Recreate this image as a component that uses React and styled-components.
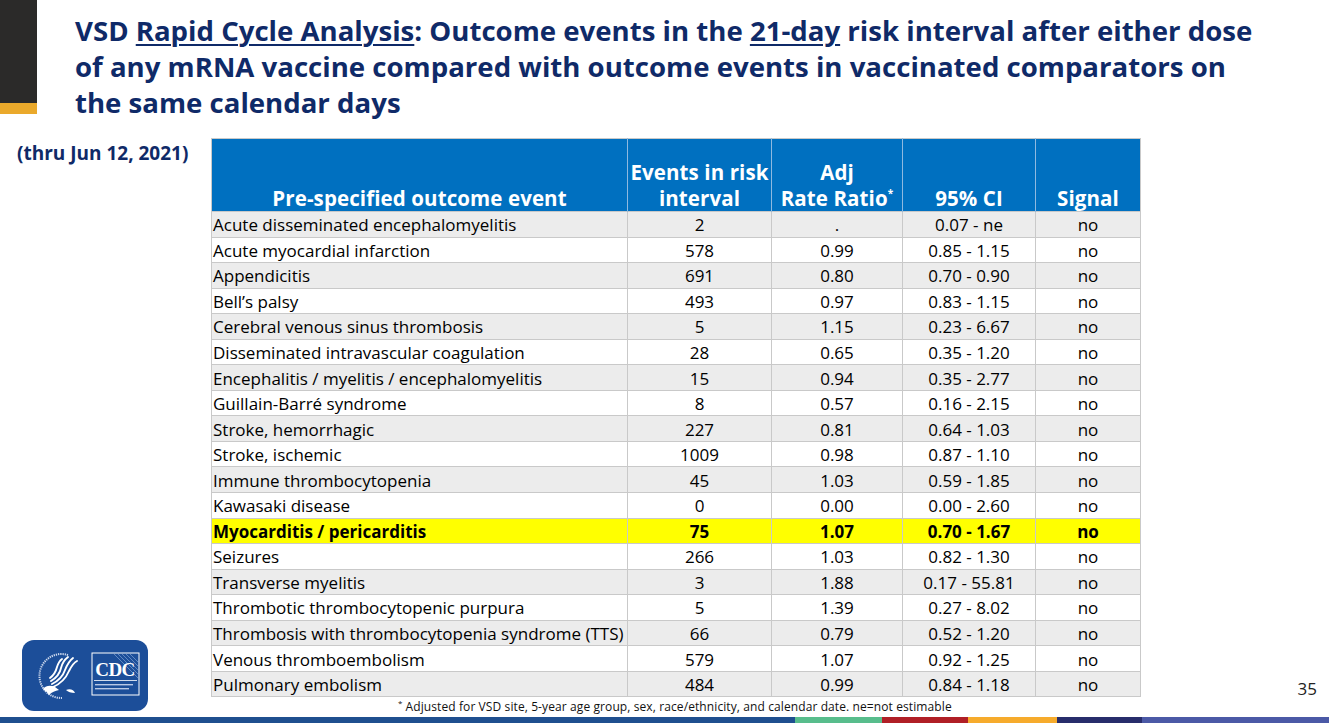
import React from "react";
import styled, { createGlobalStyle } from "styled-components";

const Global = createGlobalStyle`
    html, body {
        margin: 0;
        padding: 0;
        height: 100%;
        overflow: hidden;
        background: #ffffff;
    }
    #root {
        height: 100%;
    }
`;

const Page = styled.div`
    width: 1329px;
    height: 723px;
    display: flex;
    flex-direction: column;
    font-family: "Open Sans", Lato, sans-serif;
    color: #000;
`;

const Header = styled.div`
    display: flex;
    height: 120px;
    flex-shrink: 0;
`;

const Deco = styled.div`
    width: 37px;
    display: flex;
    flex-direction: column;
`;

const DecoBlock = styled.div`
    height: ${(p) => p.$h}px;
    background: ${(p) => p.$c};
`;

const Title = styled.h1`
    margin: 12px 0 0 38px;
    font-size: 27.6px;
    line-height: 36px;
    font-weight: 700;
    color: #0f2a68;
    white-space: nowrap;
    letter-spacing: 0;

    u {
        text-decoration-thickness: 2px;
        text-underline-offset: 3px;
    }
`;

const Main = styled.div`
    flex: 1;
    display: flex;
    min-height: 0;
`;

const Side = styled.div`
    width: 211px;
    flex-shrink: 0;
    display: flex;
    flex-direction: column;
    justify-content: space-between;
`;

const Thru = styled.div`
    margin: 20px 0 0 17px;
    font-size: 19px;
    font-weight: 700;
    color: #0f2a68;
`;

const Logo = styled.div`
    margin: 0 0 6px 22px;
    width: 126px;
    height: 71px;
`;

const Center = styled.div`
    width: 929px;
    display: flex;
    flex-direction: column;
    padding-top: 18px;
`;

const Table = styled.table`
    width: 929px;
    border-collapse: collapse;
    table-layout: fixed;
    border: 1px solid #c9c9c9;
`;

const Col = styled.col`
    width: ${(p) => p.$w}px;
`;

const HeadCell = styled.th`
    background: #0070c0;
    color: #ffffff;
    font-size: 20.5px;
    font-weight: 700;
    line-height: 26px;
    height: 72px;
    vertical-align: bottom;
    text-align: center;
    padding: 0 1px 0;
    border-left: 1px solid #8fb9e0;
    white-space: nowrap;
    letter-spacing: 0.1px;

    &:first-child {
        border-left: none;
    }

    sup {
        font-size: 10px;
        line-height: 0;
        vertical-align: 9px;
    }
`;

const Row = styled.tr`
    height: 25.55px;
    background: ${(p) => (p.$highlight ? "#ffff00" : p.$odd ? "#ffffff" : "#ececec")};
    font-weight: ${(p) => (p.$highlight ? 700 : 400)};
`;

const Cell = styled.td`
    font-size: 17px;
    line-height: 20px;
    padding: 2px 1px 0;
    text-align: ${(p) => (p.$left ? "left" : "center")};
    border: 1px solid #c9c9c9;
    white-space: nowrap;
    overflow: hidden;
`;

const Footnote = styled.div`
    margin: 2px 0 0 187px;
    font-size: 12px;
    line-height: 16px;
    letter-spacing: 0.1px;
    color: #111;

    sup {
        font-size: 8px;
        line-height: 0;
        vertical-align: 5px;
        margin-right: 3px;
    }
`;

const Right = styled.div`
    flex: 1;
    display: flex;
    align-items: flex-end;
    justify-content: flex-end;
`;

const PageNum = styled.div`
    margin: 0 12px 17px 0;
    font-size: 17px;
    color: #222;
`;

const Bar = styled.div`
    height: 6px;
    display: flex;
    flex-shrink: 0;
`;

const BarSeg = styled.div`
    width: ${(p) => p.$w}px;
    flex: ${(p) => (p.$grow ? 1 : "none")};
    background: ${(p) => p.$c};
`;

const columns = [
    { w: 416, label: ["Pre-specified outcome event"] },
    { w: 144, label: ["Events in risk", "interval"] },
    { w: 131, label: ["Adj", "Rate Ratio"], star: true },
    { w: 133, label: ["95% CI"] },
    { w: 105, label: ["Signal"] },
];

const rows = [
    ["Acute disseminated encephalomyelitis", "2", ".", "0.07 - ne", "no"],
    ["Acute myocardial infarction", "578", "0.99", "0.85 - 1.15", "no"],
    ["Appendicitis", "691", "0.80", "0.70 - 0.90", "no"],
    ["Bell’s palsy", "493", "0.97", "0.83 - 1.15", "no"],
    ["Cerebral venous sinus thrombosis", "5", "1.15", "0.23 - 6.67", "no"],
    ["Disseminated intravascular coagulation", "28", "0.65", "0.35 - 1.20", "no"],
    ["Encephalitis / myelitis / encephalomyelitis", "15", "0.94", "0.35 - 2.77", "no"],
    ["Guillain-Barré syndrome", "8", "0.57", "0.16 - 2.15", "no"],
    ["Stroke, hemorrhagic", "227", "0.81", "0.64 - 1.03", "no"],
    ["Stroke, ischemic", "1009", "0.98", "0.87 - 1.10", "no"],
    ["Immune thrombocytopenia", "45", "1.03", "0.59 - 1.85", "no"],
    ["Kawasaki disease", "0", "0.00", "0.00 - 2.60", "no"],
    ["Myocarditis / pericarditis", "75", "1.07", "0.70 - 1.67", "no"],
    ["Seizures", "266", "1.03", "0.82 - 1.30", "no"],
    ["Transverse myelitis", "3", "1.88", "0.17 - 55.81", "no"],
    ["Thrombotic thrombocytopenic purpura", "5", "1.39", "0.27 - 8.02", "no"],
    ["Thrombosis with thrombocytopenia syndrome (TTS)", "66", "0.79", "0.52 - 1.20", "no"],
    ["Venous thromboembolism", "579", "1.07", "0.92 - 1.25", "no"],
    ["Pulmonary embolism", "484", "0.99", "0.84 - 1.18", "no"],
];

const barSegments = [
    { c: "#1f4f8f", w: 795 },
    { c: "#58bd8c", w: 87 },
    { c: "#b01f26", w: 86 },
    { c: "#f6ab2c", w: 89 },
    { c: "#272d6b", w: 85 },
    { c: "#4b59a6", grow: true },
];

const CdcLogo = () => (
    <svg width="126" height="71" viewBox="0 0 126 71">
        <rect x="0" y="0" width="126" height="71" rx="12" fill="#1c4e99" />
        {/* seal ring, left half */}
        <path d="M46 15 A22 22 0 1 0 40 58" fill="none" stroke="#c9d6ec" strokeWidth="2" strokeDasharray="1.3 0.9" />
        {/* eagle wings as swept ribbons */}
        <g fill="none" stroke="#ffffff" strokeWidth="1.9" strokeLinecap="round">
            <path d="M31 47 C38 44 44 38 47 31 C49 27 51 23 55 21" />
            <path d="M30 44 C36 41 41 36 43 30 C45 25 47 21 51 18" />
            <path d="M29 41 C34 38 38 33 39 28 C40 24 42 20 46 17" />
            <path d="M28 38 C32 35 34 31 35 27 C36 24 37 21 40 19" />
        </g>
        {/* head and beak */}
        <path d="M21 49 C24 45 29 45 33 47 L37 50 C33 51 30 52 27 55 L25 52 C23 51 22 50 21 49 Z" fill="#ffffff" />
        <path d="M44 50 C48 48 52 50 53 53 C49 53 46 52 44 50 Z" fill="#ffffff" />
        {/* CDC box */}
        <rect x="70" y="13" width="47" height="42" fill="#1c4e99" stroke="#ffffff" strokeWidth="1" />
        <g stroke="#8fb0dd" strokeWidth="0.6">
            <path d="M92 14 L116 38" />
            <path d="M96 14 L116 34" />
            <path d="M100 14 L116 30" />
            <path d="M104 14 L116 26" />
            <path d="M108 14 L116 22" />
        </g>
        <text x="93" y="36" textAnchor="middle" fill="#ffffff" fontFamily="'Liberation Serif', serif" fontWeight="700" fontSize="19" letterSpacing="-0.5">CDC</text>
        <rect x="72" y="40" width="43" height="0.8" fill="#ffffff" />
        <rect x="73" y="44" width="38" height="1.4" fill="#b9c9e6" />
        <rect x="73" y="48" width="34" height="1.4" fill="#b9c9e6" />
    </svg>
);

const App = () => {
    return (
        <Page>
            <Global />
            <Header>
                <Deco>
                    <DecoBlock $h={103} $c="#2b2a29" />
                    <DecoBlock $h={11} $c="#eaa92b" />
                </Deco>
                <Title>
                    VSD <u>Rapid Cycle Analysis</u>: Outcome events in the <u>21-day</u> risk interval after either dose
                    <br />
                    of any mRNA vaccine compared with outcome events in vaccinated comparators on
                    <br />
                    the same calendar days
                </Title>
            </Header>

            <Main>
                <Side>
                    <Thru>(thru Jun 12, 2021)</Thru>
                    <Logo>
                        <CdcLogo />
                    </Logo>
                </Side>

                <Center>
                    <Table>
                        <colgroup>
                            {columns.map((c, i) => (
                                <Col key={i} $w={c.w} />
                            ))}
                        </colgroup>
                        <thead>
                            <tr>
                                {columns.map((c, i) => (
                                    <HeadCell key={i}>
                                        {c.label.map((l, j) => (
                                            <React.Fragment key={j}>
                                                {j > 0 && <br />}
                                                {l}
                                            </React.Fragment>
                                        ))}
                                        {c.star && <sup>*</sup>}
                                    </HeadCell>
                                ))}
                            </tr>
                        </thead>
                        <tbody>
                            {rows.map((r, i) => (
                                <Row key={i} $odd={i % 2 === 1} $highlight={r[0].startsWith("Myocarditis")}>
                                    {r.map((v, j) => (
                                        <Cell key={j} $left={j === 0}>
                                            {v}
                                        </Cell>
                                    ))}
                                </Row>
                            ))}
                        </tbody>
                    </Table>
                    <Footnote>
                        <sup>*</sup>Adjusted for VSD site, 5-year age group, sex, race/ethnicity, and calendar date. ne=not estimable
                    </Footnote>
                </Center>

                <Right>
                    <PageNum>35</PageNum>
                </Right>
            </Main>

            <Bar>
                {barSegments.map((s, i) => (
                    <BarSeg key={i} $c={s.c} $w={s.w} $grow={s.grow} />
                ))}
            </Bar>
        </Page>
    );
};

export default App;
